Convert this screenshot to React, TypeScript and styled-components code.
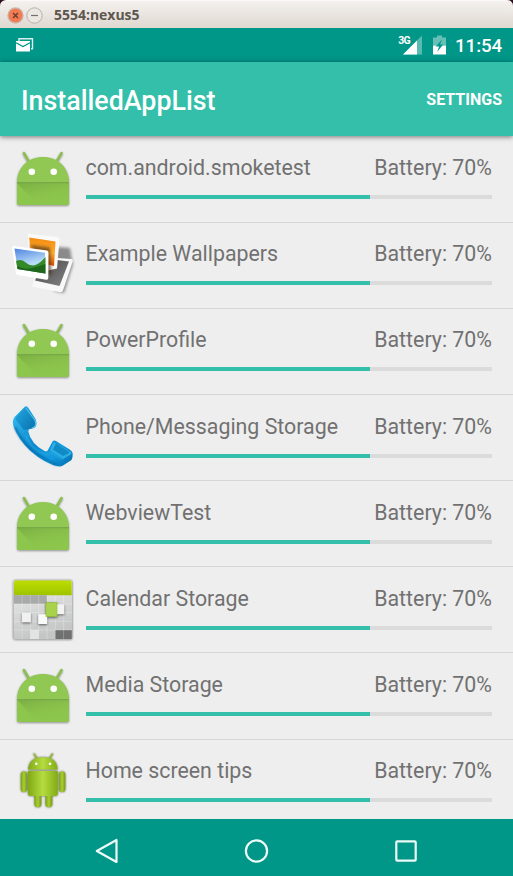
import React from 'react';
import styled, { createGlobalStyle } from 'styled-components';

const GlobalStyle = createGlobalStyle`
  * { box-sizing: border-box; }
  body { margin: 0; background: #eee; font-family: Roboto, sans-serif; }
  svg { display: block; overflow: visible; flex: none; }
`;

const Screen = styled.div`
  width: 513px;
  height: 876px;
  display: flex;
  flex-direction: column;
  background: #eeeeee;
  overflow: hidden;
`;

const WindowBackdrop = styled.div`
  flex: none;
  height: 28px;
  background: #2c0f22;
`;

const WindowBar = styled.header`
  height: 28px;
  display: flex;
  align-items: center;
  padding: 1px 0 0 7px;
  gap: 3px;
  border-radius: 6px 6px 0 0;
  border-top: 1px solid #faf9f7;
  background: linear-gradient(#f4f1ee, #dfd8d1);
`;

const WindowTitle = styled.span`
  margin-left: 7px;
  font: 700 14px/20px 'Open Sans', sans-serif;
  letter-spacing: -0.02px;
  color: #5d574e;
`;

const StatusBar = styled.div`
  flex: none;
  height: 33.5px;
  display: flex;
  align-items: center;
  padding: 0 11px 0 16px;
  background: #009688;
  color: #fff;
`;

const StatusSpacer = styled.div`
  flex: 1;
`;

const NetworkLabel = styled.span`
  align-self: flex-start;
  margin-top: 7px;
  font-size: 10.5px;
  line-height: 12px;
  font-weight: 700;
  letter-spacing: -0.7px;
`;

const Clock = styled.span`
  margin-left: 9px;
  width: 47px;
  padding-top: 2px;
  font-size: 18.8px;
  line-height: 22px;
  font-weight: 500;
  letter-spacing: -0.1px;
  white-space: nowrap;
`;

const AppBar = styled.div`
  flex: none;
  position: relative;
  height: 74.5px;
  display: flex;
  align-items: center;
  justify-content: space-between;
  padding: 1px 11px 0 21px;
  background: #33bfa9;
  color: #fff;
  box-shadow: 0 1px 5px rgba(0, 0, 0, 0.5);
`;

const AppTitle = styled.h1`
  margin: 4px 0 0;
  font-size: 26.8px;
  line-height: 32px;
  font-weight: 500;
`;

const SettingsButton = styled.button`
  border: 0;
  padding: 0;
  margin-top: 2px;
  background: none;
  color: #fff;
  font: 700 16px/20px Roboto, sans-serif;
`;

const AppList = styled.ul`
  flex: 1;
  margin: 0;
  padding: 0.6px 0 0;
  list-style: none;
  overflow: hidden;
`;

const AppRow = styled.li`
  height: 86.15px;
  display: flex;
  padding: 9.4px 21px 0 10px;
  border-bottom: 1px solid #d6d6d6;
`;

const AppDetails = styled.div`
  flex: 1;
  margin-left: 11.5px;
  padding-top: 9.1px;
`;

const AppSummary = styled.div`
  display: flex;
  justify-content: space-between;
  font-size: 21.35px;
  line-height: 26px;
  color: #717171;
  white-space: nowrap;
`;

const Track = styled.div`
  height: 4px;
  margin-top: 14px;
  background: #dbdbdb;
`;

const Level = styled.div<{ $value: number }>`
  width: ${(p) => p.$value}%;
  height: 100%;
  background: #33bfa9;
`;

const NavBar = styled.nav`
  flex: none;
  height: 57px;
  display: flex;
  align-items: center;
  justify-content: space-between;
  padding: 6px 93px 0 92px;
  background: #009688;
`;

const DefaultIcon = () => (
  <svg width="64" height="64" viewBox="0 0 64 64">
    <defs>
      <linearGradient id="fold" x1="0" y1="0" x2="0.5" y2="1">
        <stop offset="0" stopColor="#6f9f40" />
        <stop offset="1" stopColor="#8bc34a" stopOpacity="0" />
      </linearGradient>
    </defs>
    <g filter="drop-shadow(0 1px 0.8px rgba(0,0,0,.4))">
      <path d="M13.9 7l5 8.5M51.6 7l-5 8.5" stroke="#8abf50" strokeWidth="2.5" strokeLinecap="round" />
      <path d="M7 36.7C7 21 18.4 11 33 11s26 10 26 25.7V57q0 2-2 2H9q-2 0-2-2Z" fill="#91c753" />
    </g>
    <path d="M7 37h52v20q0 2-2 2H9q-2 0-2-2Z" fill="#8dc64c" />
    <path d="M7 37h52v22H28Z" fill="url(#fold)" opacity=".6" />
    <path d="M7 36.6h52" stroke="#79a947" strokeWidth="1.2" />
    <circle cx="21.8" cy="25.7" r="3.3" fill="#fff" />
    <circle cx="43.7" cy="25.7" r="3.3" fill="#fff" />
  </svg>
);

const WallpaperIcon = () => (
  <svg width="64" height="64" viewBox="0 0 64 64">
    <defs>
      <linearGradient id="orange" x1="0" y1="0" x2="0" y2="1">
        <stop stopColor="#f28a10" /><stop offset=".55" stopColor="#ffad2e" /><stop offset="1" stopColor="#d94d00" />
      </linearGradient>
      <linearGradient id="sky" x1="0" y1="0" x2=".3" y2="1">
        <stop stopColor="#4c83df" /><stop offset=".7" stopColor="#b9dcf8" />
      </linearGradient>
      <linearGradient id="slate" x1="0" y1="0" x2="1" y2="1">
        <stop stopColor="#444" /><stop offset="1" stopColor="#858585" />
      </linearGradient>
      <filter id="soft" x="-30%" y="-30%" width="160%" height="160%"><feGaussianBlur stdDeviation="1.6" /></filter>
    </defs>
    <path d="M48 15l12 1 2 12 1 4-9 29-10-2V24Z" fill="#555" opacity=".65" filter="url(#soft)" />
    <path d="M33 25l28.5 2q2 .5 1 3L53 58.5q-.8 2-3 1.700L22 54.500l3-10Z" fill="#f8f8f8" />
    <path d="M35 26.500l24 3-9.500 24.500L25 48.500Z" fill="url(#slate)" />
    <path d="M18 1.700L47.500 5q2 .5 2 2.500l-2.500 29-9 2-20-14Z" fill="#fafafa" />
    <path d="M19.300 5.500l26.200 4L44 34l-8-2-16-14Z" fill="url(#orange)" />
    <path d="M20 13l20 2.500 1.500 27-2 1Z" fill="#4b2b12" opacity=".65" filter="url(#soft)" />
    <path d="M4 14L37 18.500q1.500.3 1.500 2L38.300 46q0 2-2 1.700L7.500 43q-1.300-.3-1.500-2L2 16.200Q2 14 4 14Z" fill="#fff" />
    <path d="M4.500 16.500L35 20.700l.3 20.900L7.500 37Z" fill="url(#sky)" />
    <path d="M6 29q5-2.500 9 1 4 3.500 8.500 3.500 5-.5 12-8.500v16.600L7.500 37Z" fill="#348a28" />
    <path d="M7.300 34q7 4 15 2t13-4v9.500L7.500 37Z" fill="#1d661b" />
  </svg>
);

const PhoneIcon = () => (
  <svg width="64" height="64" viewBox="0 0 64 64">
    <defs>
      <linearGradient id="handset" x1="0" y1="0" x2="1" y2="1">
        <stop stopColor="#39c3f6" /><stop offset=".5" stopColor="#0a85cc" /><stop offset=".75" stopColor="#149be0" /><stop offset="1" stopColor="#0069aa" />
      </linearGradient>
      <linearGradient id="earpiece" x1="0" y1="0" x2="1" y2="1">
        <stop stopColor="#25a9e2" /><stop offset="1" stopColor="#0871ad" />
      </linearGradient>
      <filter id="gloss"><feGaussianBlur stdDeviation=".8" /></filter>
    </defs>
    <path d="M15 2.500L4.500 13Q2 17 3.200 21.500 8 35 20 46.500 35 60 49 62.400q2 .3 4-1L61.500 56q1.500-3 1.200-6.500-.5-2.500-3-4L46 37q-2-1-3.500.5L38.500 45q-1 3.500-4 2Q21 40 18.300 27.500q0-2.500 3-2.800 5-.7 5.200-4.700 0-3-1-5L18.500 4Q17 1.500 15 2.500Z" fill="url(#handset)" />
    <path d="M15 3L7 12q-2 2-1 4l8 10q4-1 6-1.500 5.500-.5 5.500-5l-1-4.500L18 4.500Q16.500 2 15 3Z" fill="url(#earpiece)" />
    <path d="M15.500 3.500l9.500 13q2 6-3 7.500" fill="none" stroke="#60cbf1" strokeWidth="1" />
    <path d="M43.500 38l17.500 10q1.500 1.500-.5 2.700L53 55 40 46.500Z" fill="#2cafe2" />
    <path d="M46 39.500l12.500 8q1 1 0 2L53 52l-10-6.500Z" fill="#118bc5" />
    <path d="M16 31q4 15 19 19 5 1 6-2l11.500 7.500" fill="none" stroke="#25a5e2" strokeWidth="2" filter="url(#gloss)" />
    <path d="M5 23q10 24 42 38" fill="none" stroke="#0568a5" strokeWidth="1.800" filter="url(#gloss)" />
  </svg>
);

const CalendarIcon = () => (
  <svg width="64" height="64" viewBox="0 0 64 64">
    <defs>
      <linearGradient id="lime" x1="0" y1="0" x2="0" y2="1">
        <stop stopColor="#bddd00" /><stop offset="1" stopColor="#9fc400" />
      </linearGradient>
      <linearGradient id="page" x1="0" y1="0" x2=".3" y2="1">
        <stop stopColor="#ededed" /><stop offset="1" stopColor="#c4c6c5" />
      </linearGradient>
    </defs>
    <rect x="3.500" y="3.400" width="58.600" height="59" rx="1.500" fill="url(#page)" filter="drop-shadow(0 .5px 1px rgba(0,0,0,.65))" />
    <path d="M4 18.200V5q0-1.500 1.500-1.500H60q1.700 0 1.700 1.500v13.200Z" fill="url(#lime)" />
    <rect x="3.800" y="18.200" width="33.200" height="8.700" fill="#a8a9a9" />
    <rect x="20.400" y="53" width="8.300" height="9" fill="#e3e3e3" />
    <rect x="45.200" y="53" width="16.600" height="9" fill="#707070" />
    <path d="M12.100 18.200v44M20.400 18.200v44M28.700 18.200v44M37 18.200v44M45.300 18.200v44M53.600 18.200v44M3.800 26.900H62M3.800 35.600H62M3.800 44.300H62M3.800 53H62" stroke="#fff" strokeOpacity=".35" strokeWidth=".7" />
    <g filter="drop-shadow(.7px 1px .8px rgba(0,0,0,.55))">
      <rect x="11.900" y="35.500" width="9" height="9.800" fill="#f1f1f1" />
      <rect x="28.200" y="37.200" width="9" height="9.800" fill="#fafafa" />
      <rect x="46" y="27.200" width="8.300" height="10" fill="#f3f3f3" />
      <rect x="36" y="25.600" width="11" height="14" fill="#a8d24c" stroke="#93bf32" strokeWidth=".7" />
    </g>
  </svg>
);

const RobotIcon = () => (
  <svg width="64" height="64" viewBox="0 6 64 64">
    <defs>
      <linearGradient id="torso"><stop stopColor="#7fa915" /><stop offset=".5" stopColor="#b5dc3f" /><stop offset="1" stopColor="#82ac16" /></linearGradient>
      <linearGradient id="limb"><stop stopColor="#7ca510" /><stop offset=".5" stopColor="#aace32" /><stop offset="1" stopColor="#759d10" /></linearGradient>
    </defs>
    <g filter="drop-shadow(0 .4px .8px rgba(40,50,10,.7))">
      <path d="M24 11l3.300 5M42.500 11l-3.300 5" stroke="#91b82b" strokeWidth="1.400" strokeLinecap="round" />
      <path d="M18 26.500Q19 14.300 33 14.300t14.700 12.200Z" fill="url(#torso)" />
      <rect x="10.800" y="28.600" width="6.300" height="20.400" rx="3.100" fill="url(#limb)" />
      <rect x="49" y="28.600" width="6.300" height="20.400" rx="3.100" fill="url(#limb)" />
      <rect x="24.500" y="48" width="6.700" height="16.300" rx="3.200" fill="url(#limb)" />
      <rect x="35.500" y="48" width="6.700" height="16.300" rx="3.200" fill="url(#limb)" />
      <path d="M18 28h29.700v22.500q0 2.500-2.500 2.500H20.500q-2.500 0-2.500-2.500Z" fill="url(#torso)" />
    </g>
    <circle cx="26.300" cy="20.700" r="1.300" fill="#fff" />
    <circle cx="40" cy="20.700" r="1.300" fill="#fff" />
  </svg>
);

const apps = [
  { name: 'com.android.smoketest', Icon: DefaultIcon },
  { name: 'Example Wallpapers', Icon: WallpaperIcon },
  { name: 'PowerProfile', Icon: DefaultIcon },
  { name: 'Phone/Messaging Storage', Icon: PhoneIcon },
  { name: 'WebviewTest', Icon: DefaultIcon },
  { name: 'Calendar Storage', Icon: CalendarIcon },
  { name: 'Media Storage', Icon: DefaultIcon },
  { name: 'Home screen tips', Icon: RobotIcon },
];

export default function App() {
  return (
    <Screen>
      <GlobalStyle />
      <WindowBackdrop>
        <WindowBar>
          <svg width="17" height="17" viewBox="0 0 17 17">
            <circle cx="8.500" cy="8.500" r="7.600" fill="#f17c54" stroke="#c9b8ad" strokeWidth="1.200" />
            <path d="M6 6l5 5M11 6l-5 5" stroke="#68382a" strokeWidth="1.300" />
          </svg>
          <svg width="17" height="17" viewBox="0 0 17 17">
            <circle cx="7.500" cy="8.500" r="7.700" fill="#ebe7e3" stroke="#b9b1a9" />
            <path d="M4 8.500h7" stroke="#77706a" strokeWidth="1.200" />
          </svg>
          <WindowTitle>5554:nexus5</WindowTitle>
        </WindowBar>
      </WindowBackdrop>
      <StatusBar>
        <svg width="18" height="14" viewBox="0 0 18 14">
          <path d="M3 3V.7h13.500v10H15" fill="none" stroke="#fff" strokeOpacity=".85" strokeWidth="1.400" />
          <path d="M0 3h14v10.500H0Z" fill="#fff" />
          <path d="M0 4.800l7 3.700 7-3.700" fill="none" stroke="#009688" strokeWidth="1.300" />
        </svg>
        <StatusSpacer />
        <NetworkLabel>3G</NetworkLabel>
        <svg width="12" height="20" viewBox="0 0 12 20">
          <path d="M-7 19.500L12 .5V19.500Z" fill="#fff" opacity=".35" />
          <path d="M-7 19.500L7 5.500V19.500Z" fill="#fff" />
        </svg>
        <svg width="24" height="20" viewBox="0 0 24 20">
          <path d="M11 2.500h4V.5h5v2h4v8H11Z" fill="#fff" opacity=".4" />
          <path d="M11 10.500h13V19.500H11Z" fill="#fff" />
          <path d="M20 4.500L13.800 11.500h3.300l-1.800 5.300 5.900-7.300h-3.200Z" fill="#009688" />
        </svg>
        <Clock>11:54</Clock>
      </StatusBar>
      <AppBar>
        <AppTitle>InstalledAppList</AppTitle>
        <SettingsButton>SETTINGS</SettingsButton>
      </AppBar>
      <AppList>
        {apps.map(({ name, Icon }) => (
          <AppRow key={name}>
            <Icon />
            <AppDetails>
              <AppSummary><span>{name}</span><span>Battery: 70%</span></AppSummary>
              <Track><Level $value={70} /></Track>
            </AppDetails>
          </AppRow>
        ))}
      </AppList>
      <NavBar>
        <svg width="28" height="28" viewBox="0 0 28 28" fill="none" stroke="#edfaf8" strokeWidth="2.200">
          <path d="M4.800 14L24.500 3v22Z" strokeLinejoin="round" />
        </svg>
        <svg width="28" height="28" viewBox="0 0 28 28" fill="none" stroke="#edfaf8" strokeWidth="2.200">
          <circle cx="14.500" cy="14" r="10.600" />
        </svg>
        <svg width="28" height="28" viewBox="0 0 28 28" fill="none" stroke="#edfaf8" strokeWidth="2.200">
          <rect x="4.300" y="4.300" width="19.400" height="19.400" rx="1" />
        </svg>
      </NavBar>
    </Screen>
  );
}
